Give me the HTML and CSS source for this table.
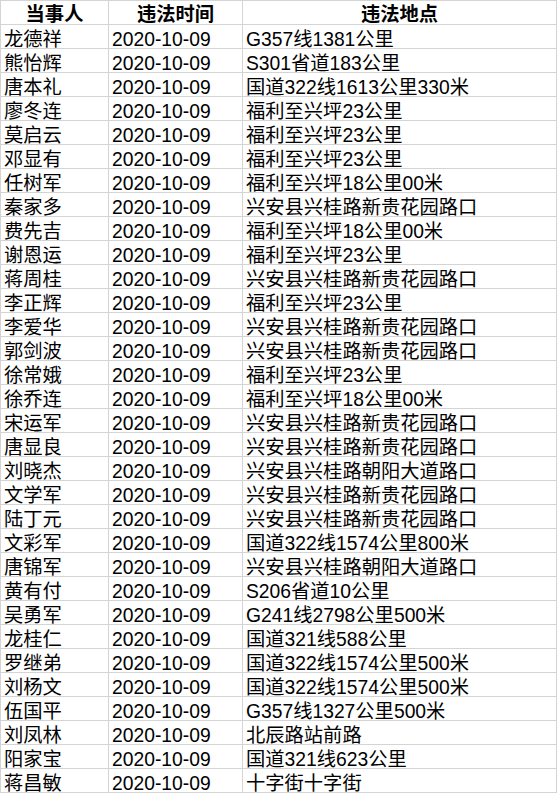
FILE: index.html
```html
<!DOCTYPE html>
<html lang="zh-CN">
<head>
<meta charset="utf-8">
<title>违法记录</title>
<link rel="stylesheet" href="styles.css">
</head>
<body>
<table class="sheet">
  <colgroup>
    <col class="c-name">
    <col class="c-date">
    <col class="c-place">
  </colgroup>
  <thead>
    <tr><th>当事人</th><th>违法时间</th><th>违法地点</th></tr>
  </thead>
  <tbody>
    <tr><td>龙德祥</td><td>2020-10-09</td><td>G357线1381公里</td></tr>
    <tr><td>熊怡辉</td><td>2020-10-09</td><td>S301省道183公里</td></tr>
    <tr><td>唐本礼</td><td>2020-10-09</td><td>国道322线1613公里330米</td></tr>
    <tr><td>廖冬连</td><td>2020-10-09</td><td>福利至兴坪23公里</td></tr>
    <tr><td>莫启云</td><td>2020-10-09</td><td>福利至兴坪23公里</td></tr>
    <tr><td>邓显有</td><td>2020-10-09</td><td>福利至兴坪23公里</td></tr>
    <tr><td>任树军</td><td>2020-10-09</td><td>福利至兴坪18公里00米</td></tr>
    <tr><td>秦家多</td><td>2020-10-09</td><td>兴安县兴桂路新贵花园路口</td></tr>
    <tr><td>费先吉</td><td>2020-10-09</td><td>福利至兴坪18公里00米</td></tr>
    <tr><td>谢恩运</td><td>2020-10-09</td><td>福利至兴坪23公里</td></tr>
    <tr><td>蒋周桂</td><td>2020-10-09</td><td>兴安县兴桂路新贵花园路口</td></tr>
    <tr><td>李正辉</td><td>2020-10-09</td><td>福利至兴坪23公里</td></tr>
    <tr><td>李爱华</td><td>2020-10-09</td><td>兴安县兴桂路新贵花园路口</td></tr>
    <tr><td>郭剑波</td><td>2020-10-09</td><td>兴安县兴桂路新贵花园路口</td></tr>
    <tr><td>徐常娥</td><td>2020-10-09</td><td>福利至兴坪23公里</td></tr>
    <tr><td>徐乔连</td><td>2020-10-09</td><td>福利至兴坪18公里00米</td></tr>
    <tr><td>宋运军</td><td>2020-10-09</td><td>兴安县兴桂路新贵花园路口</td></tr>
    <tr><td>唐显良</td><td>2020-10-09</td><td>兴安县兴桂路新贵花园路口</td></tr>
    <tr><td>刘晓杰</td><td>2020-10-09</td><td>兴安县兴桂路朝阳大道路口</td></tr>
    <tr><td>文学军</td><td>2020-10-09</td><td>兴安县兴桂路新贵花园路口</td></tr>
    <tr><td>陆丁元</td><td>2020-10-09</td><td>兴安县兴桂路新贵花园路口</td></tr>
    <tr><td>文彩军</td><td>2020-10-09</td><td>国道322线1574公里800米</td></tr>
    <tr><td>唐锦军</td><td>2020-10-09</td><td>兴安县兴桂路朝阳大道路口</td></tr>
    <tr><td>黄有付</td><td>2020-10-09</td><td>S206省道10公里</td></tr>
    <tr><td>吴勇军</td><td>2020-10-09</td><td>G241线2798公里500米</td></tr>
    <tr><td>龙桂仁</td><td>2020-10-09</td><td>国道321线588公里</td></tr>
    <tr><td>罗继弟</td><td>2020-10-09</td><td>国道322线1574公里500米</td></tr>
    <tr><td>刘杨文</td><td>2020-10-09</td><td>国道322线1574公里500米</td></tr>
    <tr><td>伍国平</td><td>2020-10-09</td><td>G357线1327公里500米</td></tr>
    <tr><td>刘凤林</td><td>2020-10-09</td><td>北辰路站前路</td></tr>
    <tr><td>阳家宝</td><td>2020-10-09</td><td>国道321线623公里</td></tr>
    <tr><td>蒋昌敏</td><td>2020-10-09</td><td>十字街十字街</td></tr>
  </tbody>
</table>
</body>
</html>
```

FILE: styles.css
```css
html, body {
  margin: 0;
  padding: 0;
  background: #ffffff;
}

.sheet {
  border-collapse: separate;
  border-spacing: 1px;
  background: #d4d4d4;
  table-layout: fixed;
  width: 557px;
  font-family: "Liberation Sans", "Noto Sans CJK SC", sans-serif;
  font-size: 19.3px;
  color: #000;
}

.c-name { width: 107px; }
.c-date { width: 133px; }
.c-place { width: 313px; }

.sheet th,
.sheet td {
  background: #ffffff;
  height: 23px;
  padding: 0 0 0 3px;
  line-height: 17px;
  vertical-align: bottom;
  white-space: nowrap;
  overflow: visible;
  box-sizing: border-box;
}

.sheet td {
  text-align: left;
  font-weight: normal;
}

.sheet th {
  text-align: center;
  font-weight: bold;
  padding: 0 0 1px 0;
}
```
